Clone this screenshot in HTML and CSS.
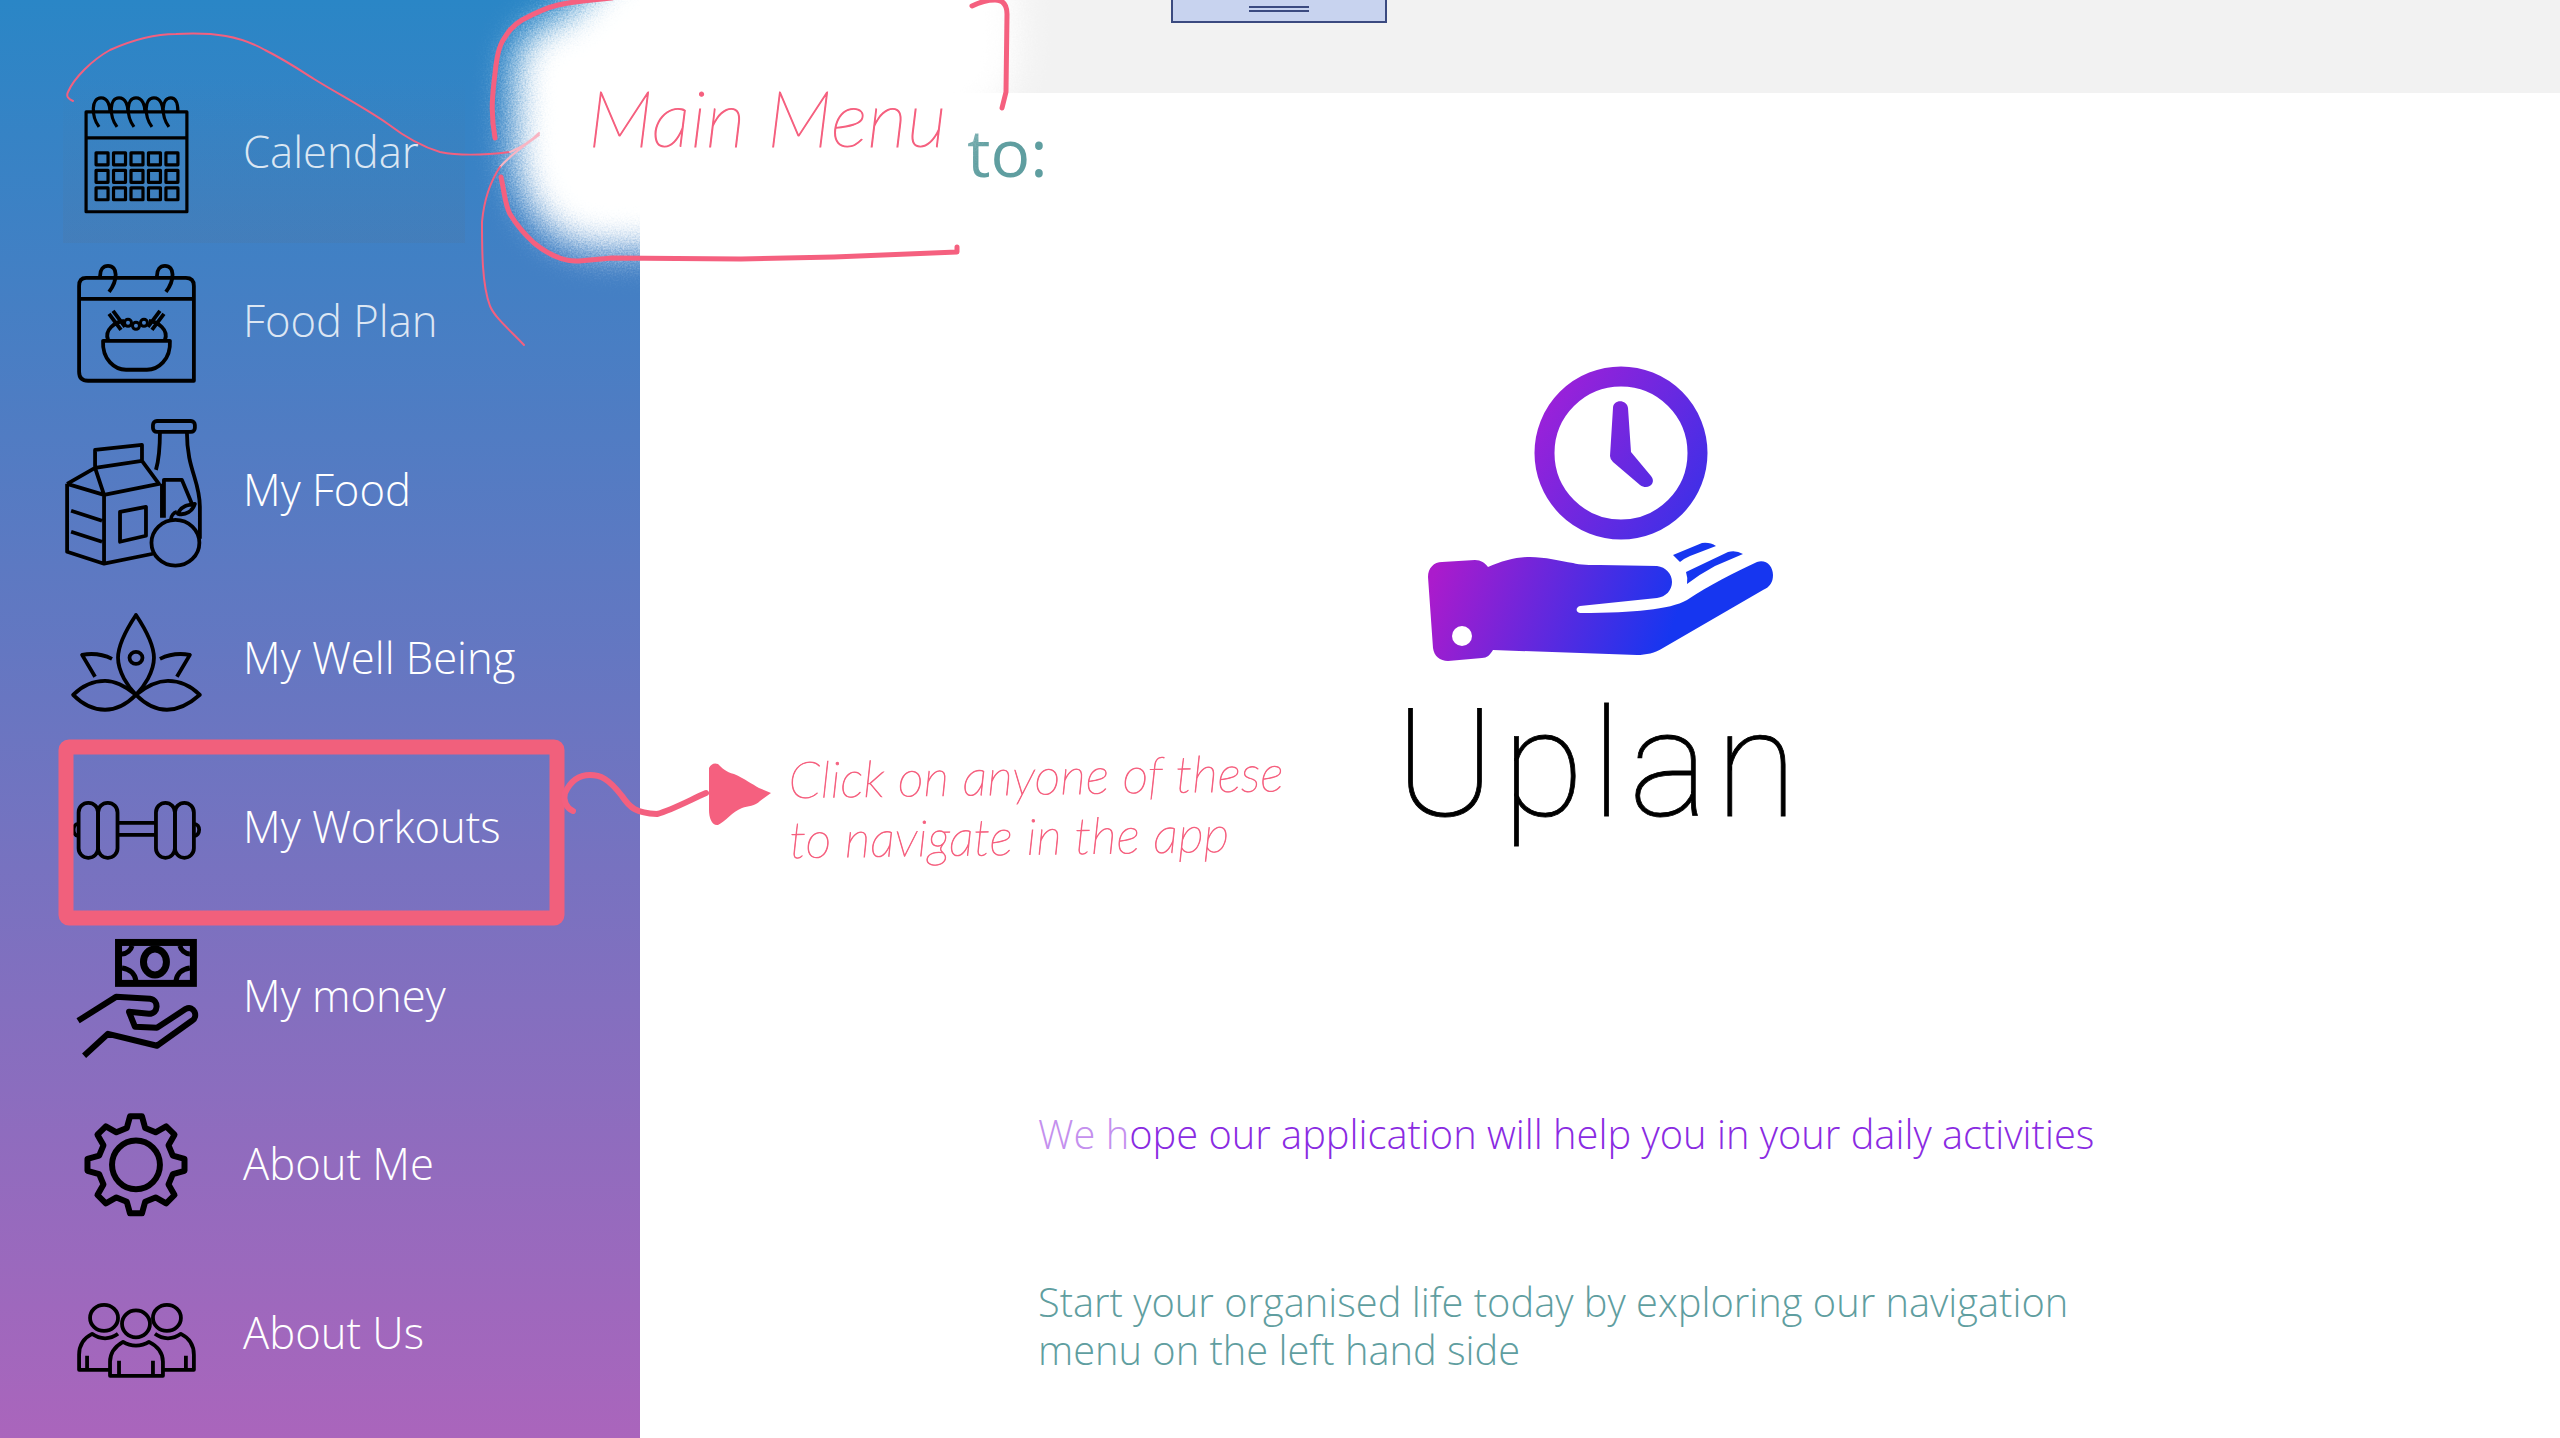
FILE: index.html
```html
<!DOCTYPE html>
<html lang="en">
<head>
<meta charset="utf-8">
<title>Uplan</title>
<link rel="stylesheet" href="styles.css">
</head>
<body>
<div class="app">
  <nav class="sidebar">
    <a class="item item-active">
      <svg class="ico" viewBox="60 74 140 169">
        <rect x="86" y="112" width="101" height="100"/>
        <path d="M86 138H187"/>
        <path d="M99 127C91 116 91 98 101 98C108 98 110 106 110 112M117 127C109 116 109 98 119 98C126 98 128 106 128 112M134 127C126 116 126 98 136 98C143 98 145 106 145 112M152 127C144 116 144 98 154 98C161 98 163 106 163 112M169 127C161 116 161 98 171 98C177 98 178 106 178 112"/>
        <path d="M96 153h12v12h-12zM113.500 153h12v12h-12zM131 153h12v12h-12zM148.500 153h12v12h-12zM166 153h12v12h-12zM96 170.500h12v12h-12zM113.500 170.500h12v12h-12zM131 170.500h12v12h-12zM148.500 170.500h12v12h-12zM166 170.500h12v12h-12zM96 188h12v12h-12zM113.500 188h12v12h-12zM131 188h12v12h-12zM148.500 188h12v12h-12zM166 188h12v12h-12z"/>
      </svg>
      <span class="label label-dim">Calendar</span>
    </a>
    <a class="item">
      <svg class="ico ico-b" viewBox="60 243 140 169">
        <path d="M86 278H186Q194 278 194 286V381H88Q79 381 79 372V286Q79 278 86 278ZM79 299H194"/>
        <path d="M109 292C118 280 118 266 108 266C103 266 100 270 100 276M166 292C175 280 175 266 165 266C160 266 157 270 157 276"/>
        <path d="M103 341H170C171 360 158 370 147 370H126C115 370 102 360 103 341ZM108 340C104 330 115 322 124 321M165 340C169 330 158 322 149 321M109 314L121 330M113 311L125 327M164 314L152 330M160 311L148 327"/>
        <circle class="thin" cx="128" cy="323" r="3.500"/><circle class="thin" cx="136" cy="326" r="3.500"/><circle class="thin" cx="144" cy="323" r="3.500"/>
      </svg>
      <span class="label label-dim">Food Plan</span>
    </a>
    <a class="item">
      <svg class="ico ico-b" viewBox="60 411 140 169">
        <path d="M95 468V450L142 445V461M67 484L95 468L142 461L159 484L104 495L95 468M67 484L104 495V564M67 484V552L104 564L153 554M71 511L102 521M71 532L102 542"/>
        <path d="M120 512L146 507V536L120 542Z"/>
        <path d="M162 484V518M156 470C160 456 160 444 160 432M187 432C187 470 200 480 200 507V539M164 518V480H182L192 504"/>
        <rect x="153" y="421" width="42" height="11" rx="4"/>
        <ellipse cx="175.500" cy="543" rx="24" ry="23"/>
        <path d="M171 520C171 516 174 513 177 512M178 514C181 506 188 505 195 504C193 511 186 516 178 514Z"/>
      </svg>
      <span class="label">My Food</span>
    </a>
    <a class="item">
      <svg class="ico ico-b" viewBox="60 580 140 169">
        <path d="M136 615C126 630 118 645 118 658C118 672 128 687 136 695C144 687 154 672 154 658C154 645 146 630 136 615Z"/>
        <ellipse cx="136" cy="658" rx="6.500" ry="6"/>
        <path d="M136 695C125 686 114 681 105 681C92 681 81 687 73 695C81 703 92 710 105 710C116 710 127 704 136 695C145 704 156 710 167 710C180 710 191 703 200 695C192 687 181 681 168 681C159 681 147 686 136 695Z"/>
        <path d="M95 677L82 655C93 653 104 655 112 659M177 677L190 655C179 653 168 655 160 659"/>
      </svg>
      <span class="label">My Well Being</span>
    </a>
    <a class="item">
      <svg class="ico ico-b" viewBox="60 749 140 169">
        <rect x="78.500" y="803" width="19.500" height="55" rx="9.500"/>
        <rect x="98" y="803" width="19.500" height="55" rx="9.500"/>
        <rect x="156" y="803" width="19" height="55" rx="9.500"/>
        <rect x="175" y="803" width="19" height="55" rx="9.500"/>
        <path d="M118 823H156M118 835H156M78 824C72 824 72 836 78 836M194 824C201 824 201 836 194 836"/>
      </svg>
      <span class="label">My Workouts</span>
    </a>
    <a class="item">
      <svg class="ico ico-c" viewBox="60 918 140 169">
        <rect class="solid-stroke" x="118.500" y="943.500" width="75" height="41"/>
        <ellipse class="ring" cx="155" cy="963" rx="11.500" ry="13"/>
        <path class="arc" d="M122 955C127 955 131 951 132 947M190 955C185 955 181 951 180 947M122 969C130 970 135 975 136 982M190 969C182 970 177 975 176 982"/>
        <path d="M78 1022L116 998L150 1000C159 1001 159 1015 149 1015L129 1013L135 1028L157 1029L186 1010C194 1006 199 1018 192 1022L157 1047L108 1035L84 1057"/>
      </svg>
      <span class="label">My money</span>
    </a>
    <a class="item">
      <svg class="ico ico-c" viewBox="60 1087 140 169">
        <path transform="translate(136 1166)" d="M-9.200-36.900L-6-48.600 6-48.600 9.200-36.900 19.600-32.600 30.200-38.600 38.600-30.200 32.600-19.600 36.900-9.200 48.600-6 48.600 6 36.900 9.200 32.600 19.600 38.600 30.200 30.200 38.600 19.600 32.600 9.200 36.900 6 48.600-6 48.600-9.200 36.900-19.600 32.600-30.200 38.600-38.600 30.200-32.600 19.600-36.900 9.200-48.600 6-48.600-6-36.900-9.200-32.600-19.600-38.600-30.200-30.200-38.600-19.600-32.600Z"/>
        <ellipse cx="136" cy="1166" rx="24" ry="24.500"/>
      </svg>
      <span class="label">About Me</span>
    </a>
    <a class="item">
      <svg class="ico ico-b" viewBox="60 1255 140 169">
        <ellipse cx="104" cy="1318" rx="14" ry="13"/>
        <ellipse cx="167" cy="1318" rx="14" ry="13"/>
        <ellipse cx="136" cy="1324" rx="14" ry="13.500"/>
        <path d="M110 1376V1362C110 1352 116 1346 123 1342C131 1347 141 1347 149 1342C157 1346 163 1352 163 1362V1376ZM119 1376V1361M153 1376V1361"/>
        <path d="M110 1370H79V1355C79 1345 84 1338 92 1334C100 1340 110 1340 118 1334M163 1370H194V1355C194 1345 189 1338 181 1334C173 1340 163 1340 155 1334M87 1370V1356M186 1370V1356"/>
      </svg>
      <span class="label">About Us</span>
    </a>
  </nav>

  <main class="main">
    <header class="topbar">
      <div class="winbtn"><span class="winlines"></span></div>
    </header>
    <h1 class="welcome">to:</h1>
    <svg class="logo" viewBox="1420 360 360 305">
      <defs>
        <linearGradient id="gc" gradientUnits="userSpaceOnUse" x1="1535" y1="400" x2="1707" y2="510">
          <stop offset="0" stop-color="#a020d8"/><stop offset="1" stop-color="#3a30e8"/>
        </linearGradient>
        <linearGradient id="gh" gradientUnits="userSpaceOnUse" x1="1435" y1="570" x2="1665" y2="650">
          <stop offset="0" stop-color="#ab1bcc"/><stop offset="1" stop-color="#1636f0"/>
        </linearGradient>
      </defs>
      <circle cx="1621" cy="453" r="76.500" fill="none" stroke="url(#gc)" stroke-width="20"/>
      <path fill="url(#gc)" d="M1613 408C1613 399 1627 399 1628 408L1631 452L1651 476C1657 483 1648 491 1640 485L1613 462Q1610 459 1610 456Z"/>
      <path fill="url(#gh)" d="M1428 577C1428 568 1434 562 1442 562L1475 560C1481 560 1485 563 1488 567C1502 561 1516 557 1530 557C1545 557 1560 561 1573 563C1580 565 1590 565 1600 565L1657 566C1666 567 1672 574 1672 582C1672 590 1666 597 1657 598L1580 606C1576 607 1575 612 1580 613C1610 613 1630 612 1647 610C1665 608 1678 605 1687 600C1708 586 1735 572 1757 562C1766 559 1773 566 1773 575C1773 582 1770 587 1763 590L1663 648C1655 653 1646 655 1637 655L1493 650C1490 655 1487 658 1482 658L1448 661C1440 661 1434 656 1433 648Z"/>
      <path fill="#1636f0" d="M1673 555L1702 543Q1710 542 1716 546L1690 556Q1685 558 1680 562ZM1686 572L1728 552Q1736 550 1743 554L1715 566Q1700 574 1687 584Q1688 578 1686 572Z"/>
      <circle cx="1462" cy="636" r="10" fill="#fff"/>
    </svg>
    <div class="brand">Uplan</div>
    <p class="tagline"><span class="faded">We h</span>ope our application will help you in your daily activities</p>
    <p class="start">Start your organised life today by exploring our navigation<br>menu on the left hand side</p>
  </main>

  <svg class="marks" viewBox="0 0 2560 1438">
    <defs>
      <filter id="grain" filterUnits="userSpaceOnUse" x="400" y="-100" width="760" height="480">
        <feGaussianBlur in="SourceGraphic" stdDeviation="17" result="b"/>
        <feTurbulence type="fractalNoise" baseFrequency="0.6" numOctaves="2" seed="4" result="n"/>
        <feDisplacementMap in="b" in2="n" scale="22" xChannelSelector="R" yChannelSelector="G"/>
      </filter>
    </defs>
    <path class="cloud" filter="url(#grain)" d="M514 70Q518 30 565 15L620 -40H1016L1018 60Q1010 105 968 122L950 130L945 250H610Q570 250 545 226Q516 195 514 150Z"/>
    <path class="ink-thin" d="M73 101C68 99 66 96 68 92C74 78 92 60 110 50C130 41 155 34 176 34C215 32 240 36 265 50C285 60 300 70 314 79C340 95 365 108 388 124C405 137 420 146 440 152C460 156 485 155 510 152"/>
    <path class="ink-faint" d="M510 152C520 148 530 142 539 133M500 167C510 155 525 145 539 135"/>
    <path class="ink-thin" d="M524 345C510 330 495 318 490 306C482 285 482 250 482 222C484 200 490 182 500 167"/>
    <path class="ink-edge" d="M495 138C491 115 492 100 494 82C496 65 497 52 502 42C508 32 512 26 522 20C535 13 545 8 558 5C575 1 590 0 612 -2"/>
    <path class="ink-edge" d="M501 177C504 190 505 205 510 214C516 224 522 232 534 243C545 252 560 262 579 261L612 258L741 259L834 257L957 252V247"/>
    <path class="ink-edge" d="M972 6C980 2 988 0 995 0C1004 0 1007 6 1007 14L1006 92L1002 108"/>
    <rect class="frame" x="66" y="747" width="491" height="171" rx="3"/>
    <path class="ink-arrow" d="M573 811C566 808 563 800 565 793C570 782 578 775 590 775C600 775 608 778 622 796C630 808 636 813 657 814C672 810 690 800 706 793"/>
    <path class="ink-fill" d="M709 768Q712 762 718 764C722 768 726 772 734 774C745 779 752 784 759 788L771 793L760 801C755 806 748 806 742 808C732 812 726 821 718 825C712 826 709 818 709 810Z"/>
  </svg>
  <div class="note-title">Main Menu</div>
  <div class="note-click">Click on anyone of these<br>to navigate in the app</div>
</div>
</body>
</html>
```

FILE: styles.css
```css
* { box-sizing: border-box; }
html, body { margin: 0; padding: 0; background: #fff; }
.app {
  position: relative;
  display: grid;
  grid-template-columns: 640px 1fr;
  width: 2560px;
  height: 1438px;
  overflow: hidden;
  font-family: "Open Sans", "Noto Sans", sans-serif;
}

/* sidebar */
.sidebar {
  display: flex;
  flex-direction: column;
  padding: 74px 0 0 63px;
  background: linear-gradient(180deg, #2a86c6 0%, #aa65bc 100%);
}
.item {
  display: flex;
  align-items: center;
  gap: 43px;
  height: 168.7px;
  width: 402px;
  color: #fff;
}
.item-active {
  background: linear-gradient(180deg, rgba(70, 90, 120, 0) 0%, rgba(90, 110, 130, 0.14) 100%);
}
.ico {
  width: 140px;
  height: 168.7px;
  flex: none;
  margin-left: -3px;
  overflow: visible;
  fill: none;
  stroke: #000;
  stroke-width: 3.2;
  stroke-linejoin: round;
}
.ico-b { stroke-width: 3.8; }
.ico-c { stroke-width: 6; }
.ico .thin { stroke-width: 3; }
.ico .solid-stroke { stroke-width: 7; stroke-linejoin: miter; }
.ico .ring { stroke-width: 7; }
.ico .arc { stroke-width: 5; }
.label {
  font-size: 43.6px;
  font-weight: 350;
  line-height: 56px;
  white-space: nowrap;
  position: relative;
  top: -7px;
}
.label-dim { color: rgba(255, 255, 255, 0.82); }

/* main */
.main {
  display: flex;
  flex-direction: column;
  align-items: flex-start;
  min-width: 0;
}
.topbar {
  width: 100%;
  height: 93px;
  flex: none;
  padding-left: 531px;
  background: #f2f2f2;
}
.winbtn {
  display: flex;
  align-items: flex-end;
  justify-content: center;
  width: 216px;
  height: 23px;
  padding-bottom: 9px;
  background: #c8d3ef;
  border: 2px solid #3b4a80;
  border-top: 0;
}
.winlines {
  display: block;
  width: 60px;
  height: 6px;
  border-top: 2px solid #3b4a80;
  border-bottom: 2px solid #3b4a80;
}
.welcome {
  margin: 12px 0 0 327px;
  font-size: 66px;
  font-weight: 400;
  line-height: 92px;
  color: #5f9ea0;
}
.logo {
  width: 360px;
  height: 305px;
  flex: none;
  margin: 163px 0 0 780px;
}
.brand {
  margin: 10px 0 4px 755px;
  font-family: "Roboto", sans-serif;
  font-weight: 100;
  font-size: 150px;
  line-height: 180px;
  color: #000;
  letter-spacing: 7px;
  -webkit-text-stroke: 0.8px #000;
}
.tagline {
  margin: 249px 0 0 398px;
  font-size: 39.8px;
  font-weight: 350;
  line-height: 52px;
  color: #8a2be2;
}
.faded { color: #c490ee; }
.start {
  margin: 118px 0 0 398px;
  font-size: 39.8px;
  font-weight: 350;
  line-height: 48px;
  color: #5f9ea0;
}

/* hand-drawn annotations */
.marks {
  position: absolute;
  left: 0;
  top: 0;
  width: 2560px;
  height: 1438px;
  pointer-events: none;
}
.cloud { fill: #fff; }
.ink-thin, .ink-edge, .ink-arrow, .ink-faint { fill: none; stroke-linecap: round; stroke-linejoin: round; }
.ink-thin { stroke: #f3607f; stroke-width: 2; }
.ink-faint { stroke: #f8b5c3; stroke-width: 2; }
.ink-edge { stroke: #f5607f; stroke-width: 5; }
.ink-arrow { stroke: #f3607f; stroke-width: 6; }
.ink-fill { fill: #f5607f; }
.frame { fill: none; stroke: #f1607c; stroke-width: 15; }
.note-title {
  position: absolute;
  left: 588px;
  top: 69px;
  font-family: "Lato", sans-serif;
  font-style: italic;
  font-weight: 200;
  font-size: 79px;
  line-height: 96px;
  color: #f5607f;
  white-space: nowrap;
  -webkit-text-stroke: 1.1px #f5607f;
}
.note-click {
  position: absolute;
  left: 789px;
  top: 749px;
  font-family: "Lato", sans-serif;
  font-style: italic;
  font-weight: 200;
  font-size: 50.5px;
  line-height: 60px;
  color: #f5607f;
  white-space: nowrap;
  transform: rotate(-0.8deg);
  transform-origin: left center;
  -webkit-text-stroke: 0.8px #f5607f;
}
```
